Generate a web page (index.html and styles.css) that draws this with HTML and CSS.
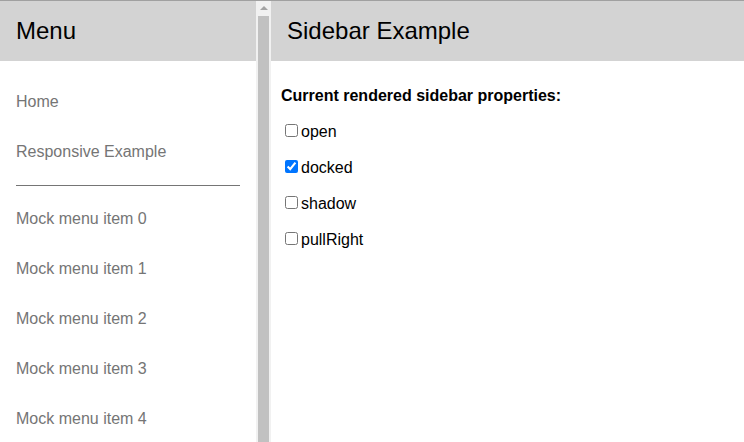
FILE: index.html
```html
<!DOCTYPE html>
<html>
<head>
<meta charset="utf-8">
<link rel="stylesheet" href="styles.css">
</head>
<body>
<div class="root">
  <aside class="sidebar">
    <div class="sidebar-panel">
      <div class="panel-header">Menu</div>
      <nav class="sidebar-content">
        <a class="sidebar-link" href="#">Home</a>
        <a class="sidebar-link" href="#">Responsive Example</a>
        <div class="divider"></div>
        <a class="sidebar-link" href="#">Mock menu item 0</a>
        <a class="sidebar-link" href="#">Mock menu item 1</a>
        <a class="sidebar-link" href="#">Mock menu item 2</a>
        <a class="sidebar-link" href="#">Mock menu item 3</a>
        <a class="sidebar-link" href="#">Mock menu item 4</a>
      </nav>
    </div>
    <div class="scrollbar" aria-hidden="true">
      <div class="scroll-up"><span class="arrow"></span></div>
      <div class="scroll-thumb"></div>
    </div>
  </aside>
  <main class="main">
    <div class="panel-header">Sidebar Example</div>
    <div class="content">
      <p class="title">Current rendered sidebar properties:</p>
      <p><label><input type="checkbox">open</label></p>
      <p><label><input type="checkbox" checked>docked</label></p>
      <p><label><input type="checkbox">shadow</label></p>
      <p><label><input type="checkbox">pullRight</label></p>
    </div>
  </main>
</div>
</body>
</html>
```
FILE: styles.css
```css
html, body {
  margin: 0;
  padding: 0;
  height: 100%;
  overflow: hidden;
  background: #fff;
}
body {
  font-family: "Liberation Sans", Arial, sans-serif;
  font-size: 16px;
  color: #000;
}
.root {
  display: flex;
  border-top: 1px solid #a0a0a0;
  height: 441px;
  overflow: hidden;
}
.sidebar {
  flex: 0 0 auto;
  width: 271px;
  display: flex;
  background: #fff;
}
.sidebar-panel {
  width: 256px;
  overflow: hidden;
}
.scrollbar {
  width: 15px;
  background: #f1f1f1;
  display: flex;
  flex-direction: column;
}
.scroll-up {
  height: 15px;
  display: flex;
  justify-content: center;
  align-items: flex-start;
}
.arrow {
  margin-top: 5px;
  width: 0;
  height: 0;
  border-left: 4px solid transparent;
  border-right: 4px solid transparent;
  border-bottom: 4px solid #a3a3a3;
}
.scroll-thumb {
  flex: 1 1 auto;
  margin: 0 2px;
  background: #c1c1c1;
}
.panel-header {
  background: #d3d3d3;
  padding: 16px;
  font-size: 24px;
  line-height: 28px;
}
.sidebar-content {
  padding: 16px;
}
.sidebar-link {
  display: block;
  padding: 16px 0;
  color: #757575;
  text-decoration: none;
  line-height: 18px;
}
.divider {
  margin: 8px 0;
  height: 1px;
  background: #757575;
}
.main {
  flex: 1 1 auto;
  min-width: 0;
}
.content {
  padding: 10px;
}
.content p {
  margin: 16px 0;
}
.content .title {
  font-weight: bold;
}
```
